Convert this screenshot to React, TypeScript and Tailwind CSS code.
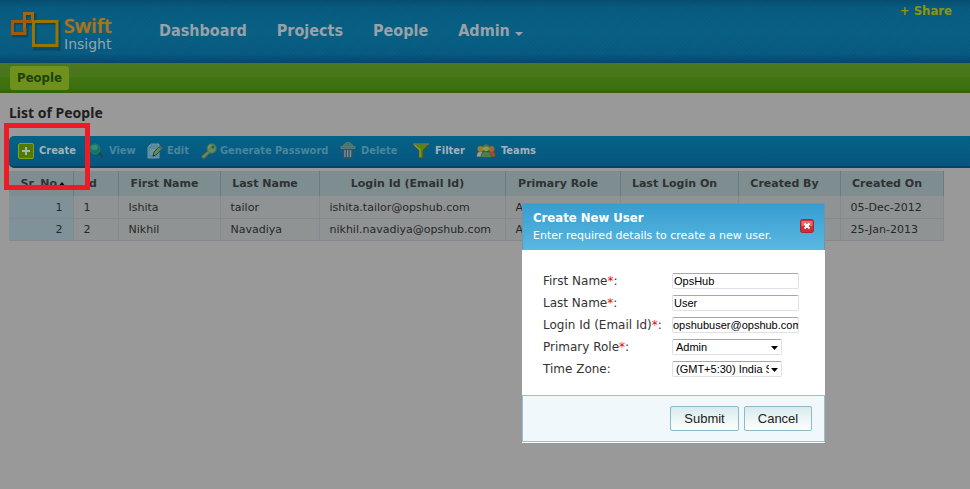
import React from 'react';

const body = "font-['Verdana','DejaVu_Sans',sans-serif]";
const tahoma = "font-['Tahoma','DejaVu_Sans_Condensed','DejaVu_Sans',sans-serif]";

function Logo() {
  return (
    <div className="flex h-[63px] w-[159px] shrink-0 pl-[11px]">
      <svg width="53" height="63" viewBox="11 0 53 63" fill="none" aria-hidden="true">
        <g stroke="#083f58" strokeWidth="3" opacity="0.65">
          <path d="M14 23h13v13H14zM26 15h9v9h-9zM35 23h24v26H35z" />
        </g>
        <path d="M24.500 31V13.500h8V21" stroke="#a0670c" strokeWidth="3" />
        <path d="M25 33.500H12.500v-12H33" stroke="#a05a0c" strokeWidth="3" />
        <path d="M25 28v7" stroke="#a05a0c" strokeWidth="3" />
        <path d="M33 21.500h24v24H33.500V20" stroke="#987500" strokeWidth="3" />
      </svg>
      <div className="flex flex-col pt-[15px]">
        <span className="font-['Open_Sans','Noto_Sans',sans-serif] text-[20px] font-semibold leading-[22px] text-[#a57424] [text-shadow:0_0_1px_#a57424]">Swift</span>
        <span className={body + ' text-[14px] leading-[14px] text-[#93a5ae]'}>Insight</span>
      </div>
    </div>
  );
}

const CreateIcon = () => (
  <svg width="16" height="16" viewBox="0 0 16 16" aria-hidden="true">
    <rect x=".5" y=".5" width="15" height="15" rx="1.500" fill="#527a00" stroke="#84a317" />
    <path d="M8 4v8M4 8h8" stroke="#a5b7b1" strokeWidth="2" />
  </svg>
);
const ViewIcon = () => (
  <svg width="16" height="16" viewBox="0 0 16 16" aria-hidden="true">
    <path d="M9.500 9.500 13 13" stroke="#164f49" strokeWidth="3" strokeLinecap="round" />
    <circle cx="6" cy="6" r="5" fill="#157461" stroke="#20816b" />
    <ellipse cx="5.500" cy="4.500" rx="3.500" ry="2.500" fill="#318b81" />
  </svg>
);
const EditIcon = () => (
  <svg width="16" height="16" viewBox="0 0 16 16" aria-hidden="true">
    <path d="M4 1h8v14H1V4z" fill="#5b8b9b" stroke="#6c98a6" />
    <path d="M1 4h3V1" fill="#8aa9b0" stroke="#32788d" strokeWidth=".8" />
    <path d="M3 7h5M3 9h4M3 11h3" stroke="#7ba1ac" />
    <path d="m6 13 1-4 5-5 2.500 2.500-5.500 5.500z" fill="#668a43" stroke="#284f50" />
    <path d="m12 4 2.500 2.500 1.300-1.300L13.300 2.700z" fill="#755e6c" />
    <path d="m5.500 13.500.8-2.500 1.700 1.700z" fill="#123647" />
  </svg>
);
const KeyIcon = () => (
  <svg width="16" height="16" viewBox="0 0 16 16" aria-hidden="true">
    <path d="m7 8-6 5v2h3l1-2h1l1-2h1l2-2" fill="#78865b" stroke="#4d6d5c" />
    <path d="M10.500.8c3 0 4.700 2.200 4.700 4.700 0 2.800-2 4.700-4.700 4.700S6 8 6 5.500 7.800.8 10.500.8Z" fill="#648a57" stroke="#427353" />
    <circle cx="11.800" cy="4" r="1.500" fill="#215f67" />
    <path d="M7.500 5c0-2 1.200-3 3-3" stroke="#8a9e77" fill="none" />
  </svg>
);
const TrashIcon = () => (
  <svg width="16" height="18" viewBox="0 0 16 18" aria-hidden="true">
    <path d="m2.500 7 1 9.500h8.500L13 7z" fill="#2d5769" stroke="#285365" />
    <path d="M5 8v7M7.700 8v7M10.500 8v7" stroke="#83959a" strokeWidth="1.300" />
    <path d="M1 4.500h14v2H1zM3 4.500 4.500 2h7L13 4.500" fill="#38796a" stroke="#5c7c74" />
    <path d="M6 2V.8h4V2" stroke="#70805d" fill="none" />
  </svg>
);
const FilterIcon = () => (
  <svg width="18" height="16" viewBox="0 0 18 16" aria-hidden="true">
    <path d="M.7 1h16.600L11 7.500V15H7V7.500z" fill="#5b8500" stroke="#4b4a38" />
    <path d="m2.500 2 5.500 5v7" fill="none" stroke="#86a04a" strokeWidth="1.200" />
    <path d="M1 1h16" stroke="#85806a" />
  </svg>
);
const TeamsIcon = () => (
  <svg width="20" height="14" viewBox="0 0 20 14" aria-hidden="true">
    <path d="M.5 13c0-4 1.500-5.500 4-5.500s4 1.500 4 5.500z" fill="#949c9d" stroke="#37484c" strokeWidth=".6" />
    <circle cx="4.500" cy="5" r="3" fill="#a17b21" />
    <path d="M11.500 13c0-4 1-5.500 4-5.500s4 1.500 4 5.500z" fill="#94552d" stroke="#464239" strokeWidth=".6" />
    <circle cx="15.500" cy="5" r="3" fill="#a1682b" />
    <path d="M5 13.500C5 9 6.500 7.500 10 7.500s5 1.500 5 6z" fill="#4c8049" stroke="#2f4f50" strokeWidth=".6" />
    <circle cx="10" cy="4" r="3.200" fill="#839c58" />
    <path d="M6.800 4c0-5 6.400-5 6.400 0-1-2-5-2-6.400 0" fill="#567330" />
  </svg>
);

const tools = [
  { label: 'Create', icon: CreateIcon, width: 'w-[71px]', gap: 'gap-[5px]', on: true },
  { label: 'View', icon: ViewIcon, width: 'w-[58px]', gap: 'gap-[4px]', on: false },
  { label: 'Edit', icon: EditIcon, width: 'w-[54px]', gap: 'gap-[4px]', on: false },
  { label: 'Generate Password', icon: KeyIcon, width: 'w-[139px]', gap: 'gap-[3px]', on: false },
  { label: 'Delete', icon: TrashIcon, width: 'w-[72px]', gap: 'gap-[5px]', on: false },
  { label: 'Filter', icon: FilterIcon, width: 'w-[64px]', gap: 'gap-[5px]', on: true },
  { label: 'Teams', icon: TeamsIcon, width: 'w-[70px]', gap: 'gap-[5px]', on: true },
];

const columns = [
  { label: 'Sr. No', width: 'w-[64px]' },
  { label: 'Id', width: 'w-[45px]' },
  { label: 'First Name', width: 'w-[102px]' },
  { label: 'Last Name', width: 'w-[99px]' },
  { label: 'Login Id (Email Id)', width: 'w-[186px]' },
  { label: 'Primary Role', width: 'w-[115px]' },
  { label: 'Last Login On', width: 'w-[118px]' },
  { label: 'Created By', width: 'w-[102px]' },
  { label: 'Created On', width: 'w-[103px]' },
];

const people = [
  ['1', '1', 'Ishita', 'tailor', 'ishita.tailor@opshub.com', 'Admin', '', '', '05-Dec-2012'],
  ['2', '2', 'Nikhil', 'Navadiya', 'nikhil.navadiya@opshub.com', 'Admin', '', '', '25-Jan-2013'],
];

function PeopleTable() {
  return (
    <table className="mt-[3px] table-fixed border-collapse text-[11px] text-[#272727]">
      <thead>
        <tr className="h-[25px] bg-[#7d8d90]">
          {columns.map((c, i) => (
            <th key={c.label} scope="col" className={(i === 0 ? 'pl-[5px] ' : 'pr-[9px] ') + c.width + ' whitespace-nowrap border-r border-[#6b7b82] pb-0 pt-[2px] text-center font-bold text-[#2f3133]'}>
              {c.label}
              {i === 0 && (
                <svg className="ml-px inline" width="8" height="5" viewBox="0 0 8 5" aria-hidden="true"><path d="M4 0 8 5H0z" fill="#000" /></svg>
              )}
            </th>
          ))}
        </tr>
      </thead>
      <tbody>
        {people.map((row) => (
          <tr key={row[0]} className="h-[22px] border-b border-[#85888e] bg-[#8f9394]">
            {row.map((cell, i) => (
              <td key={i} className={(i === 0 ? 'bg-[#7f9299] pr-[10px] text-right' : 'pl-[10px] text-left') + ' whitespace-nowrap border-r border-[#85888e] pb-0 pt-[3px]'}>{cell}</td>
            ))}
          </tr>
        ))}
      </tbody>
    </table>
  );
}

const control = "h-[16px] rounded-[2px] border border-[#dfe0e8] border-t-[#a6a7ae] bg-white font-['Arial','Liberation_Sans',sans-serif] text-[11px] leading-[14px] text-black outline-none";

function Row({ id, label, required, children }: { id: string; label: string; required?: boolean; children: React.ReactNode }) {
  return (
    <div className="flex h-[22px] items-center">
      <label htmlFor={id} className="w-[129px] shrink-0 whitespace-nowrap text-[12px] text-[#333]">
        {label}{required && <span className="text-[#f00]">*</span>}:
      </label>
      {children}
    </div>
  );
}

function Select({ id, value }: { id: string; value: string }) {
  return (
    <div className="relative flex w-[110px]">
      <select id={id} className={control + ' w-full appearance-none overflow-hidden pl-[3px] pr-[12px]'}>
        <option>{value}</option>
      </select>
      <svg className="pointer-events-none absolute right-[4px] top-[7px]" width="7" height="4" viewBox="0 0 7 4" aria-hidden="true"><path d="M0 0h7L3.500 4z" fill="#000" /></svg>
    </div>
  );
}

function CreateUserDialog() {
  const button = "h-[25px] rounded-[2px] border border-[#8fb8ca] bg-linear-to-b from-[#d7ebec] to-white font-['Arial','Liberation_Sans',sans-serif] text-[13px] text-[#222]";
  return (
    <div role="dialog" aria-labelledby="dialog-title" className="absolute left-[522px] top-[203px] w-[303px] bg-white">
      <div className="flex h-[47px] items-start justify-between border border-b-0 border-[#7195a7] bg-linear-to-b from-[#369dd0] to-[#5ab8e0] px-[10px] text-white">
        <div className="pt-[5px]">
          <h2 id="dialog-title" className={tahoma + ' text-[13px] font-bold leading-[17px]'}>Create New User</h2>
          <p className="whitespace-nowrap text-[11px] leading-[20px]">Enter required details to create a new user.</p>
        </div>
        <button aria-label="Close" className="mt-[15px] size-[14px]">
          <svg width="14" height="14" viewBox="0 0 14 14" aria-hidden="true">
            <rect x=".5" y=".5" width="13" height="13" rx="2" fill="#cf2d37" stroke="#a9252d" />
            <path d="M1.500 2h11v5h-11z" fill="#e76c6c" />
            <path d="m4.500 4.500 5 5m0-5-5 5" stroke="#fff" strokeWidth="2" />
          </svg>
        </button>
      </div>
      <form onSubmit={(e) => e.preventDefault()}>
        <div className="pb-[15px] pl-[21px] pt-[20px]">
          <Row id="first" label="First Name" required><input id="first" defaultValue="OpsHub" className={control + ' w-[127px] px-px'} /></Row>
          <Row id="last" label="Last Name" required><input id="last" defaultValue="User" className={control + ' w-[127px] px-px'} /></Row>
          <Row id="login" label="Login Id (Email Id)" required><input id="login" defaultValue="opshubuser@opshub.com" className={control + ' w-[127px]'} /></Row>
          <Row id="role" label="Primary Role" required><Select id="role" value="Admin" /></Row>
          <Row id="zone" label="Time Zone"><Select id="zone" value="(GMT+5:30) India Standard Time" /></Row>
        </div>
        <div className="flex h-[47px] items-center justify-end gap-[5px] border border-[#9dbfce] bg-[#f0f8fc] pr-[12px]">
          <button type="submit" className={button + ' w-[69px]'}>Submit</button>
          <button type="button" className={button + ' w-[68px]'}>Cancel</button>
        </div>
      </form>
      <div className="h-px bg-white" />
    </div>
  );
}

export default function App() {
  return (
    <div className={body + ' relative min-h-screen overflow-hidden bg-[#999]'}>
      <header className="flex h-[63px] bg-[repeating-linear-gradient(135deg,#00000008_0px,#00000008_1px,transparent_1px,transparent_3px),linear-gradient(#064f70,#085b81_12%,#086184_50%,#085b81_85%,#06476a)]">
        <Logo />
        <nav className={tahoma + ' flex flex-1 items-start gap-[30px] pt-[21px] text-[16px] font-bold leading-[20px] text-[#98a2a8]'}>
          <a href="#dashboard">Dashboard</a>
          <a href="#projects">Projects</a>
          <a href="#people">People</a>
          <a href="#admin" className="flex items-center gap-[5px]">
            Admin
            <svg className="mt-[6px]" width="8" height="4" viewBox="0 0 8 4" aria-hidden="true"><path d="M0 0h8L4 4z" fill="#98a2a8" /></svg>
          </a>
        </nav>
        <a href="#share" className={tahoma + ' pr-[18px] pt-[2px] text-[13px] font-bold leading-[17px] text-[#909600]'}>+ Share</a>
      </header>
      <div className="flex h-[30px] items-center bg-[linear-gradient(#4b781f,#49761b_46%,#3f7410_46%,#3c700e_85%,#316105)] pl-[10px]">
        <a href="#people" className={tahoma + ' flex h-[24px] w-[59px] items-center justify-center rounded-[3px] bg-[#6f911b] text-[13px] font-bold text-[#1c4209]'}>People</a>
      </div>
      <main className="pl-[9px]">
        <h1 className="pt-[10px] font-['Noto_Sans','Open_Sans',sans-serif] text-[14px] font-bold leading-[20px] text-[#1d1e20]">List of People</h1>
        <div className={tahoma + ' mt-[13px] flex h-[32px] rounded-l-[5px] border-b-2 border-[#044366] bg-linear-to-b from-[#046386] to-[#07557e] pl-[9px] text-[11px] font-bold'}>
          {tools.map((t) => {
            const Icon = t.icon;
            return (
              <button key={t.label} disabled={!t.on} className={`${t.width} ${t.gap} ${t.on ? 'text-[#a1b3bb]' : 'text-[#4a859d]'} flex h-full shrink-0 items-center whitespace-nowrap`}>
                <Icon />
                {t.label}
              </button>
            );
          })}
        </div>
        <PeopleTable />
      </main>
      <div className="pointer-events-none absolute left-[4px] top-[123px] h-[67px] w-[86px] border-[5px] border-[#ed1c24]" />
      <CreateUserDialog />
    </div>
  );
}
